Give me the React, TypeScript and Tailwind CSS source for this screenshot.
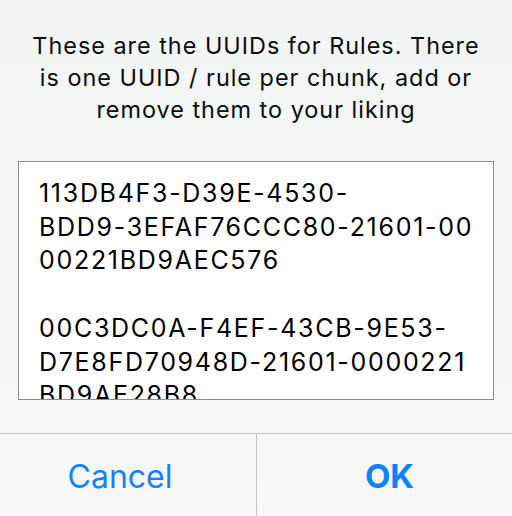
import React from "react";

const rules = [
  ["113DB4F3-D39E-4530-", "BDD9-3EFAF76CCC80-21601-00", "00221BD9AEC576"],
  ["00C3DC0A-F4EF-43CB-9E53-", "D7E8FD70948D-21601-0000221", "BD9AE28B8"],
];

export default function App() {
  return (
    <div
      className="w-[512px] h-[516px] flex flex-col bg-gradient-to-b from-[#f3f5f4] to-[#f7f7f7] overflow-hidden"
      style={{ fontFamily: "Inter, 'Noto Sans', sans-serif" }}
    >
      <p className="pt-[30px] px-4 text-center text-[23.4px] leading-[32px] tracking-[1px] text-[#0b0b0b]">
        These are the UUIDs for Rules. There
        <br />
        is one UUID / rule per chunk, add or
        <br />
        remove them to your liking
      </p>

      <div className="mt-[35px] mx-[18px] h-[239px] border border-[#8e8e8e] bg-white overflow-hidden pt-[15px] pl-[20px]">
        {rules.map((lines, i) => (
          <div key={i} className={i > 0 ? "mt-[33.7px]" : ""}>
            {lines.map((l) => (
              <div
                key={l}
                className="whitespace-nowrap text-[25px] leading-[33.7px] tracking-[1.7px] text-black"
              >
                {l}
              </div>
            ))}
          </div>
        ))}
      </div>

      <div className="mt-auto h-[83px] border-t border-[#c4c4c4] grid grid-cols-2">
        <button className="flex items-center justify-center pt-[4px] pr-[16px] text-[32px] text-[#1282fc]">
          Cancel
        </button>
        <button className="flex items-center justify-center border-l border-[#c4c4c4] pt-[4px] pl-[10px] text-[33px] font-bold text-[#1282fc]">
          OK
        </button>
      </div>
    </div>
  );
}
